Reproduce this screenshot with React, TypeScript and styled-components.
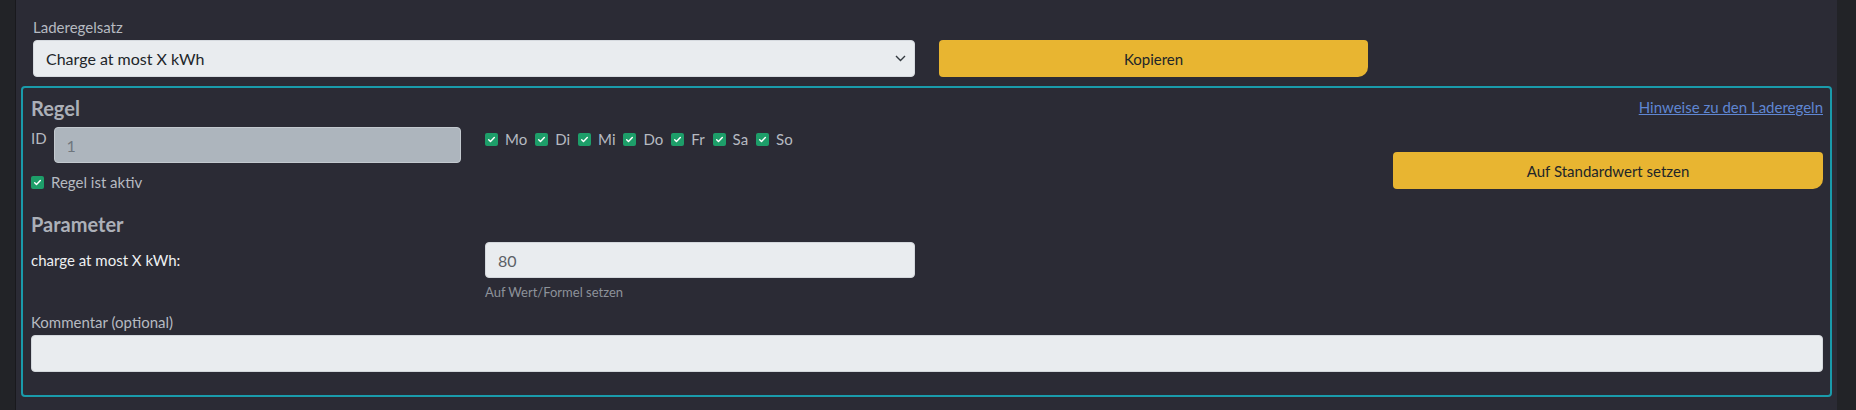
import React from 'react';
import styled, { createGlobalStyle } from 'styled-components';

const COLORS = {
  outer: '#222327',
  page: '#2b2b35',
  teal: '#1a9bab',
  yellow: '#e8b531',
  field: '#e9ecef',
  disabled: '#adb5bd',
  label: '#b6bac1',
  heading: '#acb0b8',
  green: '#1d9e69',
  link: '#5f86d2',
  dark: '#212529',
};

const GlobalStyle = createGlobalStyle`
  body {
    margin: 0;
    background: ${COLORS.outer};
    font-family: Lato, 'Liberation Sans', sans-serif;
    font-size: 15px;
  }
`;

const Page = styled.div`
  display: flex;
  height: 410px;
  padding-left: 15px;
`;

const Main = styled.main`
  flex: 1;
  margin-right: 19px;
  background: ${COLORS.page};
  border-left: 1px solid #19191d;
  padding: 15px 5px 13px 5px;
`;

const Grid = styled.div<{ $top?: number }>`
  display: grid;
  grid-template-columns: repeat(4, 1fr);
  column-gap: 24px;
  margin-top: ${(p) => p.$top ?? 0}px;
`;

const TopGrid = styled(Grid)`
  padding: 0 11px 0 12px;
  align-items: end;
`;

const Span2 = styled.div`
  grid-column: span 2;
`;

const Label = styled.div<{ $top?: number }>`
  color: ${COLORS.label};
  font-size: 15px;
  line-height: 24px;
  margin-top: ${(p) => p.$top ?? 0}px;
  margin-bottom: 1px;
`;

const SelectBox = styled.div`
  height: 37px;
  box-sizing: border-box;
  background: ${COLORS.field};
  border: 1px solid #d6dadf;
  border-radius: 4px;
  display: flex;
  align-items: center;
  justify-content: space-between;
  padding: 0 8px 0 12px;
  color: ${COLORS.dark};
  font-size: 16px;
`;

const Button = styled.button<{ $top?: number }>`
  width: 100%;
  height: 37px;
  border: none;
  background: ${COLORS.yellow};
  color: ${COLORS.dark};
  font-family: inherit;
  font-size: 15px;
  border-radius: 4px 4px 10px 4px;
  margin-top: ${(p) => p.$top ?? 0}px;
`;

const Card = styled.section`
  margin-top: 9px;
  border: 2px solid ${COLORS.teal};
  border-radius: 4px;
  padding: 8px 7px 23px 8px;
`;

const Heading = styled.h3<{ $top?: number }>`
  margin: ${(p) => p.$top ?? 0}px 0 0;
  font-size: 20px;
  line-height: 24px;
  font-weight: 700;
  color: ${COLORS.heading};
`;

const Column = styled.div<{ $pad?: number }>`
  display: flex;
  flex-direction: column;
  padding-top: ${(p) => p.$pad ?? 0}px;
`;

const RightColumn = styled(Column)`
  align-items: flex-end;
`;

const IdRow = styled.div`
  display: flex;
  align-items: flex-start;
  gap: 7px;
  margin-top: 7px;
`;

const IdLabel = styled.span`
  color: ${COLORS.label};
  line-height: 24px;
  margin-top: -1px;
`;

const Input = styled.div<{ $disabled?: boolean; $tall?: boolean }>`
  flex: 1;
  height: ${(p) => (p.$tall ? 37 : 36)}px;
  box-sizing: border-box;
  background: ${(p) => (p.$disabled ? COLORS.disabled : COLORS.field)};
  border: 1px solid ${(p) => (p.$disabled ? '#c3c9cf' : '#d3d7dc')};
  border-radius: 4px;
  display: flex;
  align-items: center;
  padding: 0 12px;
  color: ${(p) => (p.$disabled ? '#6f767d' : '#5b6066')};
  font-size: 16px;
`;

const CheckRow = styled.div<{ $top?: number; $gap?: number }>`
  display: flex;
  align-items: center;
  gap: ${(p) => p.$gap ?? 10}px;
  margin-top: ${(p) => p.$top ?? 0}px;
`;

const CheckItem = styled.label`
  display: flex;
  align-items: center;
  gap: 7px;
  color: ${COLORS.label};
  font-size: 15px;
  line-height: 24px;
`;

const Box = styled.span`
  width: 13px;
  height: 13px;
  border-radius: 2px;
  background: ${COLORS.green};
  display: flex;
  align-items: center;
  justify-content: center;
`;

const Link = styled.a`
  color: ${COLORS.link};
  text-decoration: underline;
  font-size: 15px;
  line-height: 24px;
  margin-top: -1px;
`;

const ParamLabel = styled.div`
  height: 36px;
  display: flex;
  align-items: center;
  color: #eef0f2;
  font-size: 15px;
`;

const Help = styled.div`
  margin-top: 4px;
  font-size: 13px;
  line-height: 21px;
  color: #8d929a;
`;

const Check = ({ label }: { label: string }) => (
  <CheckItem>
    <Box>
      <svg width="9" height="9" viewBox="0 0 16 16">
        <path d="M3 8.5l3.2 3L13 4.5" fill="none" stroke="#fff" strokeWidth="2.6" strokeLinecap="round" strokeLinejoin="round" />
      </svg>
    </Box>
    {label}
  </CheckItem>
);

const days = ['Mo', 'Di', 'Mi', 'Do', 'Fr', 'Sa', 'So'];

export default function App() {
  return (
    <>
      <GlobalStyle />
      <Page>
        <Main>
          <TopGrid>
            <Span2>
              <Label>Laderegelsatz</Label>
              <SelectBox>
                Charge at most X kWh
                <svg width="11" height="7" viewBox="0 0 11 7">
                  <path d="M1 1l4.5 4.5L10 1" fill="none" stroke="#343a40" strokeWidth="1.4" />
                </svg>
              </SelectBox>
            </Span2>
            <Button>Kopieren</Button>
          </TopGrid>

          <Card>
            <Grid>
              <Column>
                <Heading>Regel</Heading>
                <IdRow>
                  <IdLabel>ID</IdLabel>
                  <Input $disabled>1</Input>
                </IdRow>
                <CheckRow $top={7}>
                  <Check label="Regel ist aktiv" />
                </CheckRow>
              </Column>
              <Column $pad={31}>
                <CheckRow $gap={8}>
                  {days.map((d) => (
                    <Check key={d} label={d} />
                  ))}
                </CheckRow>
              </Column>
              <div />
              <RightColumn>
                <Link href="#">Hinweise zu den Laderegeln</Link>
                <Button $top={33}>Auf Standardwert setzen</Button>
              </RightColumn>
            </Grid>

            <Heading $top={18}>Parameter</Heading>
            <Grid $top={6}>
              <ParamLabel>charge at most X kWh:</ParamLabel>
              <div>
                <Input>80</Input>
                <Help>Auf Wert/Formel setzen</Help>
              </div>
            </Grid>

            <Label $top={7}>Kommentar (optional)</Label>
            <Input $tall />
          </Card>
        </Main>
      </Page>
    </>
  );
}
